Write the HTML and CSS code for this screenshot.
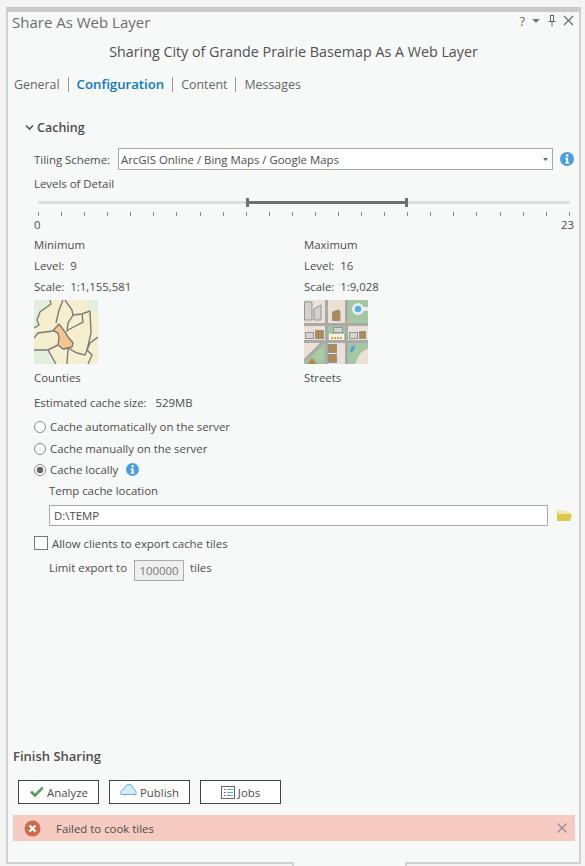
FILE: index.html
```html
<!DOCTYPE html>
<html lang="en">
<head>
    <meta charset="UTF-8">
    <meta name="viewport" content="width=device-width, initial-scale=1.0">
    <title>Share As Web Layer</title>
    <link rel="stylesheet" href="styles.css">
</head>
<body>
    <div class="panel">
        <div class="title-bar">
            <span class="title">Share As Web Layer</span>
            <div class="window-icons">
                <span class="help">?</span>
                <svg width="10" height="6" viewBox="0 0 10 6"><path d="M1 1h8L5 5z" fill="#777"/></svg>
                <svg width="10" height="13" viewBox="0 0 10 13"><path d="M3 1.500h4M3.500 1.500v6M6.500 1.500v6M1.500 7.500h7M5 8v4.500" fill="none" stroke="#666"/></svg>
                <svg width="11" height="11" viewBox="0 0 11 11"><path d="M1 1l9 9M10 1l-9 9" fill="none" stroke="#666" stroke-width="1.1"/></svg>
            </div>
        </div>
        <h1 class="heading">Sharing City of Grande Prairie Basemap As A Web Layer</h1>
        <div class="tabs">
            <a>General</a>
            <a class="active">Configuration</a>
            <a>Content</a>
            <a>Messages</a>
        </div>

        <div class="section-head">
            <svg width="9" height="7" viewBox="0 0 9 7"><path d="M1 1.500l3.500 3.500L8 1.500" fill="none" stroke="#555" stroke-width="1.6"/></svg>
            <span>Caching</span>
        </div>

        <div class="content">
            <div class="tiling">
                <label>Tiling Scheme:</label>
                <div class="select">
                    <span>ArcGIS Online / Bing Maps / Google Maps</span>
                    <svg width="5" height="3" viewBox="0 0 5 3"><path d="M0 0h5L2.500 3z" fill="#666"/></svg>
                </div>
                <svg class="info" width="14" height="14" viewBox="0 0 14 14"><circle cx="7" cy="7" r="7" fill="#4a9fdc"/><rect x="5.900" y="2.400" width="2.400" height="2.200" fill="#fff"/><path d="M5 5.800h3.200v4.600h1v1.200H5v-1.200h1V7H5z" fill="#fff"/></svg>
            </div>
            <div class="line lod-title">Levels of Detail</div>

            <div class="slider">
                <div class="track"></div>
                <div class="range" style="left: 39.13%; width: 30.43%"></div>
                <div class="ticks" id="ticks"></div>
            </div>
            <div class="scale-ends"><span>0</span><span>23</span></div>

            <div class="levels">
                <div class="level">
                    <div class="line">Minimum</div>
                    <div class="line">Level:&nbsp; 9</div>
                    <div class="line">Scale:&nbsp; 1:1,155,581</div>
                    <svg class="thumb" width="64" height="64" viewBox="0 0 64 64">
                        <rect width="64" height="64" fill="#e2efdd"/>
                        <path d="M16 0H50L56 11 64 14V64H22L14 50H0V28L5 25 3 20 6 12 17 4Z" fill="#f5efcf"/>
                        <g fill="none" stroke="#7b7b78" stroke-width="1.400">
                            <path d="M16 0l1 4-11 8-3 8 2 5-5 3"/>
                            <path d="M31 0l7 10 1 5-5 8-1 9"/>
                            <path d="M29 0l-4 10-3 13"/>
                            <path d="M39 15l9-1 8-3"/>
                            <path d="M48 14l1 8-15 8"/>
                            <path d="M56 11l1 22-4 17 5 5-4 9"/>
                            <path d="M64 37l-8 6-3 7"/>
                            <path d="M0 38l4-5 15-2"/>
                            <path d="M0 50h14l10-5"/>
                            <path d="M14 50l8 14"/>
                            <path d="M29 49l5-1 9 5 8 2 2-5"/>
                            <path d="M34 48l-1 16"/>
                        </g>
                        <path d="M19 30.500l6-6.500 6 8 3 5 5 6-1 4-9 2-5-4 1-7-1-5z" fill="#f8c48d" stroke="#7b7b78" stroke-width="1.400"/>
                    </svg>
                    <div class="line thumb-name">Counties</div>
                </div>
                <div class="level">
                    <div class="line">Maximum</div>
                    <div class="line">Level:&nbsp; 16</div>
                    <div class="line">Scale:&nbsp; 1:9,028</div>
                    <svg class="thumb" width="64" height="64" viewBox="0 0 64 64">
                        <rect width="64" height="64" fill="#ebe0d6"/>
                        <path d="M43 0h21v23H43zM24 26h17v14H24zM18 43h3v21H0v-4zM43 43h21v6c-6 1-8 5-10 8-1 3-2 5-3 7h-8z" fill="#a4c6a2"/>
                        <rect x="25" y="34" width="15" height="6" fill="#f3f3e6"/>
                        <path d="M0 61L19 42" stroke="#a9a9a9" stroke-width="3"/>
                        <path d="M21 0h3v64h-3zM41 0h3v64h-3zM0 23h64v3H0zM0 40h64v3H0z" fill="#a9a9a9"/>
                        <path d="M.500 2h7.500v18H.500zM10 9l7-4v15h-7z" fill="#d2d2d2" stroke="#949492"/>
                        <path d="M28.500 12l5-2 2.500 1v9.500H28.500z" fill="#b08a52" stroke="#949492"/>
                        <circle cx="54" cy="9" r="6" fill="#e7edf1"/><rect x="56" y="7" width="8" height="4" fill="#e7edf1"/><circle cx="54" cy="9" r="3.200" fill="#5ab0e6"/>
                        <path d="M43 19l5 4h-5z" fill="#dcb38a"/>
                        <rect x="1.500" y="32.500" width="8" height="6" fill="#d2d2d2" stroke="#949492"/>
                        <rect x="11.500" y="30.500" width="8" height="8" fill="#b08a52" stroke="#949492"/>
                        <rect x="29.500" y="27.500" width="9" height="5" fill="#d2d2d2" stroke="#949492"/>
                        <path d="M27 38h2M30 38h2M33 38h2M36 38h2" stroke="#e0a04a" stroke-width="2"/>
                        <rect x="45.500" y="32.500" width="8" height="6" fill="#d2d2d2" stroke="#949492"/>
                        <rect x="55.500" y="31.500" width="6" height="7" fill="#b08a52" stroke="#949492"/>
                        <rect x="24.500" y="44.500" width="8" height="8" fill="#b08a52" stroke="#949492"/>
                        <rect x="24.500" y="54.500" width="8" height="8" fill="#b08a52" stroke="#949492"/>
                        <circle cx="16" cy="55" r="5" fill="#a9cda6"/>
                        <path d="M3 64l5-6 5 6z" fill="#b08a52"/>
                        <path d="M46 52l1-5 4-2-1 5-3 3z" fill="#4f9fdc"/>
                    </svg>
                    <div class="line thumb-name">Streets</div>
                </div>
            </div>

            <div class="line cache-size">Estimated cache size: &nbsp; 529MB</div>

            <div class="radio-row"><span class="radio"></span>Cache automatically on the server</div>
            <div class="radio-row second"><span class="radio"></span>Cache manually on the server</div>
            <div class="radio-row">
                <span class="radio checked"></span>Cache locally
                <svg class="info small" width="13" height="13" viewBox="0 0 14 14"><circle cx="7" cy="7" r="7" fill="#4a9fdc"/><rect x="5.900" y="2.400" width="2.400" height="2.200" fill="#fff"/><path d="M5 5.800h3.200v4.600h1v1.200H5v-1.200h1V7H5z" fill="#fff"/></svg>
            </div>
            <div class="line temp-label">Temp cache location</div>
            <div class="temp-row">
                <div class="text-input">D:\TEMP</div>
                <svg width="16" height="13" viewBox="0 0 16 13"><path d="M1 2l1-1h4l1 1h6l1 1v2H1z" fill="#f3e9ae"/><path d="M1 12V3h1v9zM2 5h14l-2 7H1z" fill="#dcc94c"/></svg>
            </div>
            <div class="check-row"><span class="checkbox"></span>Allow clients to export cache tiles</div>
            <div class="limit-row">
                <span>Limit export to</span>
                <span class="limit-input">100000</span>
                <span>tiles</span>
            </div>
        </div>

        <div class="footer">
            <h2>Finish Sharing</h2>
            <div class="actions">
                <button>
                    <svg width="15" height="12" viewBox="0 0 15 12"><path d="M1 6.500l2-2 3 3L13 .5l1.500 2L6 11.500z" fill="#5a9e5c"/></svg>
                    Analyze
                </button>
                <button class="publish">
                    <svg class="cloud" width="17" height="11" viewBox="0 0 17 11"><path d="M1 10.500c-1-3 .5-5 3-5 1-3 3-5 5-5 2.500 0 4 2 4.500 4.500 2 .5 3 2.500 2.500 5.500z" fill="#d8ebf8" stroke="#5ab0e6"/></svg>
                    Publish
                </button>
                <button>
                    <svg width="14" height="13" viewBox="0 0 14 13"><rect x=".5" y=".5" width="13" height="12" fill="#fff" stroke="#666"/><path d="M3 3.500h1.500M3 6.500h1.500M3 9.500h1.500" stroke="#555"/><path d="M6 3.500h6M6 6.500h6M6 9.500h6" stroke="#5ab0e6"/></svg>
                    Jobs
                </button>
            </div>
            <div class="error-bar">
                <svg width="17" height="17" viewBox="0 0 17 17"><circle cx="8.500" cy="8.500" r="8" fill="#cd6a4f"/><path d="M5.500 5.500l6 6M11.500 5.500l-6 6" stroke="#fff" stroke-width="2.200"/></svg>
                <span>Failed to cook tiles</span>
                <svg class="error-close" width="10" height="10" viewBox="0 0 10 10"><path d="M.5.500l9 9M9.500.500l-9 9" stroke="#8d8d8d" stroke-width="1.300"/></svg>
            </div>
        </div>
        <div class="dock-tab"></div>
    </div>
    <script>
        // 24 levels, 0 to 23
        let ticks = document.getElementById('ticks');
        for (let i = 0; i < 24; i++) {
            ticks.appendChild(document.createElement('i'));
        }
    </script>
</body>
</html>
```

FILE: styles.css
```css
html, body {
    margin: 0;
    height: 866px;
    overflow: hidden;
}
body {
    font-family: "Open Sans", "Noto Sans", sans-serif;
    font-size: 11.4px;
    color: #4c4c4c;
    background-color: #f4f4f4;
}
.panel {
    position: relative;
    box-sizing: border-box;
    height: 857px;
    margin: 7px 4px 0 6px;
    border: 2px solid #d0d0d0;
    border-top: 5px solid #c9c9c9;
    background-color: #f7f9f8;
    display: flex;
    flex-direction: column;
}
.title-bar {
    height: 20px;
    display: flex;
    justify-content: space-between;
    align-items: center;
    padding: 0 5px 0 4px;
}
.title {
    font-size: 15px;
    color: #6d6d6d;
}
.window-icons {
    display: flex;
    align-items: center;
    gap: 6px;
    margin-top: -3px;
}
.help {
    font-size: 13px;
    color: #666;
}
.heading {
    margin: 10px 0 0;
    height: 20px;
    line-height: 20px;
    font-size: 14.3px;
    font-weight: normal;
    text-align: center;
    color: #505050;
}
.tabs {
    margin-top: 12px;
    height: 20px;
    padding-left: 6px;
    display: flex;
    align-items: center;
    font-size: 12.4px;
    color: #666;
}
.tabs a {
    padding: 0 8px;
    line-height: 15px;
    border-left: 1px solid #999;
}
.tabs a:first-child {
    padding-left: 0;
    border-left: none;
}
.tabs a.active {
    color: #0a79bf;
    font-size: 13.2px;
    font-weight: 600;
}
.section-head {
    margin-top: 23px;
    height: 20px;
    padding-left: 17px;
    display: flex;
    align-items: center;
    gap: 3px;
    font-size: 12.5px;
    font-weight: 600;
}
.content {
    padding: 0 5px 0 26px;
}
.line {
    height: 21px;
    line-height: 21px;
}
.tiling {
    margin-top: 11px;
    height: 22px;
    display: flex;
    align-items: center;
}
.tiling label {
    flex: none;
    width: 84px;
    white-space: nowrap;
}
.select {
    flex: none;
    box-sizing: border-box;
    width: 435px;
    height: 22px;
    padding: 0 4px 0 2px;
    display: flex;
    align-items: center;
    justify-content: space-between;
    border: 1px solid #a9a9a9;
    background-color: #fff;
}
.info {
    flex: none;
    margin-left: 7px;
}
.lod-title {
    margin-top: 3px;
}
.slider {
    position: relative;
    margin: 1px 0 0 4px;
    width: 532px;
    height: 22px;
}
.track {
    position: absolute;
    left: 0;
    right: 0;
    top: 6px;
    height: 3px;
    background-color: #dedede;
}
.range {
    position: absolute;
    top: 3px;
    height: 9px;
    box-sizing: border-box;
    border-left: 3px solid #707070;
    border-right: 3px solid #707070;
    background: linear-gradient(#707070, #707070) center / 100% 3px no-repeat;
}
.ticks {
    position: absolute;
    left: 0;
    right: 0;
    top: 17px;
    display: flex;
    justify-content: space-between;
}
.ticks i {
    width: 1px;
    height: 4px;
    background-color: #888;
}
.scale-ends {
    display: flex;
    justify-content: space-between;
    height: 16px;
    line-height: 16px;
}
.levels {
    display: flex;
    margin-top: 1px;
}
.level {
    flex: none;
    width: 270px;
}
.thumb {
    display: block;
    margin-top: 3px;
}
.thumb-name {
    margin-top: 3px;
}
.cache-size {
    margin-top: 4px;
}
.radio-row {
    height: 21px;
    display: flex;
    align-items: center;
}
.cache-size + .radio-row {
    margin-top: 3px;
}
.radio-row.second {
    margin-top: 1px;
}
.radio {
    box-sizing: border-box;
    width: 12px;
    height: 12px;
    margin-right: 4px;
    border: 1px solid #8a8a8a;
    border-radius: 50%;
    background-color: #fff;
}
.radio.checked {
    background: radial-gradient(circle, #666 0 3px, #fff 3.6px);
}
.info.small {
    margin-left: 8px;
}
.temp-label {
    margin-left: 15px;
}
.temp-row {
    margin: 4px 0 0 15px;
    display: flex;
    align-items: center;
    gap: 8px;
}
.text-input {
    flex: none;
    box-sizing: border-box;
    width: 499px;
    height: 21px;
    line-height: 19px;
    padding-left: 4px;
    border: 1px solid #a9a9a9;
    background-color: #fff;
}
.check-row {
    margin-top: 7px;
    height: 20px;
    display: flex;
    align-items: center;
}
.checkbox {
    box-sizing: border-box;
    width: 14px;
    height: 14px;
    margin-right: 4px;
    border: 1px solid #777;
    background-color: #fff;
}
.limit-row {
    margin: 4px 0 0 15px;
    display: flex;
    align-items: flex-start;
    gap: 6px;
    line-height: 21px;
}
.limit-input {
    box-sizing: border-box;
    width: 50px;
    height: 21px;
    margin: 3px 0 0 1px;
    line-height: 20px;
    text-align: center;
    color: #777;
    border: 1px solid #aaa;
    background-color: #efefef;
}
.footer {
    margin-top: auto;
    padding: 0 4px 21px 5px;
}
.footer h2 {
    margin: 0;
    height: 20px;
    line-height: 20px;
    font-size: 13px;
    font-weight: 600;
}
.actions {
    margin: 14px 0 11px 5px;
    display: flex;
    gap: 10px;
}
.actions button {
    box-sizing: border-box;
    width: 81px;
    height: 24px;
    padding: 0;
    display: flex;
    align-items: center;
    justify-content: center;
    gap: 3px;
    font: inherit;
    color: #4c4c4c;
    border: 1px solid #444;
    background-color: #fff;
}
.cloud {
    margin-top: -5px;
}
.error-bar {
    height: 26px;
    padding: 0 8px 0 11px;
    display: flex;
    align-items: center;
    background-color: #f6cbc2;
}
.error-bar span {
    margin-left: 15px;
    flex: 1;
}
.dock-tab {
    position: absolute;
    left: 284px;
    bottom: -4px;
    width: 115px;
    height: 4px;
    box-sizing: border-box;
    border-left: 2px solid #d0d0d0;
    border-right: 2px solid #d0d0d0;
    background-color: #f7f9f8;
}
```
